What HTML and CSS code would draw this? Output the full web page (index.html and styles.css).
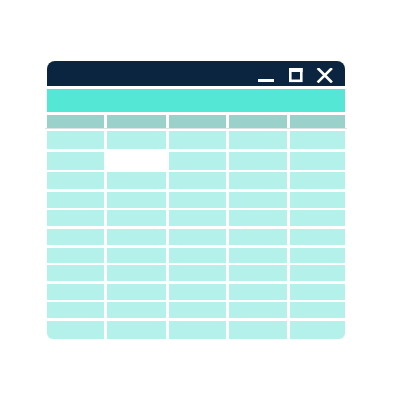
FILE: index.html
```html
<!DOCTYPE html>
<html>
<head>
<meta charset="utf-8">
<link rel="stylesheet" href="styles.css">
</head>
<body>
<div class="window">
  <div class="titlebar">
    <svg class="ctl" width="75" height="15" viewBox="0 0 75 15">
      <rect x="0" y="11" width="16" height="3" fill="#fff"/>
      <rect x="32.3" y="1.3" width="11" height="11.5" fill="none" stroke="#fff" stroke-width="2.6"/>
      <rect x="31" y="0" width="13.6" height="4" fill="#fff"/>
      <path d="M60.5 1 L73 13.5 M73 1 L60.5 13.5" stroke="#fff" stroke-width="2.6" stroke-linecap="square"/>
    </svg>
  </div>
  <div class="toolbar"></div>
  <div class="header">
    <div class="hcell"></div><div class="hcell"></div><div class="hcell"></div><div class="hcell"></div><div class="hcell"></div>
  </div>
  <div class="rule"></div>
  <div class="grid">
    <div class="cell"></div><div class="cell"></div><div class="cell"></div><div class="cell"></div><div class="cell"></div>
    <div class="cell"></div><div class="cell empty"></div><div class="cell"></div><div class="cell"></div><div class="cell"></div>
    <div class="cell"></div><div class="cell"></div><div class="cell"></div><div class="cell"></div><div class="cell"></div>
    <div class="cell"></div><div class="cell"></div><div class="cell"></div><div class="cell"></div><div class="cell"></div>
    <div class="cell"></div><div class="cell"></div><div class="cell"></div><div class="cell"></div><div class="cell"></div>
    <div class="cell"></div><div class="cell"></div><div class="cell"></div><div class="cell"></div><div class="cell"></div>
    <div class="cell"></div><div class="cell"></div><div class="cell"></div><div class="cell"></div><div class="cell"></div>
    <div class="cell"></div><div class="cell"></div><div class="cell"></div><div class="cell"></div><div class="cell"></div>
    <div class="cell"></div><div class="cell"></div><div class="cell"></div><div class="cell"></div><div class="cell"></div>
    <div class="cell"></div><div class="cell"></div><div class="cell"></div><div class="cell"></div><div class="cell"></div>
    <div class="cell bl"></div><div class="cell"></div><div class="cell"></div><div class="cell"></div><div class="cell br"></div>
  </div>
</div>
</body>
</html>
```

FILE: styles.css
```css
html, body {
  margin: 0;
  padding: 0;
  background: #fff;
}
body {
  width: 400px;
  height: 401px;
  padding-top: 61px;
  box-sizing: border-box;
}
.window {
  margin-left: 47px;
  width: 298px;
  display: flex;
  flex-direction: column;
}
.titlebar {
  height: 25px;
  background: #0b2541;
  border-radius: 8px 8px 0 0;
  display: flex;
  justify-content: flex-end;
  align-items: flex-start;
  padding: 7px 12px 0 0;
  box-sizing: border-box;
}
.ctl {
  display: block;
}
.toolbar {
  margin-top: 3px;
  height: 23px;
  background: #55e7d6;
}
.header {
  margin-top: 3px;
  display: grid;
  grid-template-columns: 57px 59px 57px 58px 55px;
  column-gap: 3px;
}
.hcell {
  height: 13px;
  background: #9bd1cb;
}
.rule {
  height: 1px;
  background: #dde3e3;
  margin: 0 -2px;
}
.grid {
  margin-top: 2px;
  display: grid;
  grid-template-columns: 57px 59px 57px 58px 55px;
  grid-template-rows: 18px 18px 17px 16px 16px 16px 15px 16px 16px 16px 18px;
  gap: 2.6px 3px;
}
.cell {
  background: #b4f1ea;
}
.cell.empty {
  background: #fff;
}
.cell.bl {
  border-bottom-left-radius: 6px;
}
.cell.br {
  border-bottom-right-radius: 6px;
}
```
